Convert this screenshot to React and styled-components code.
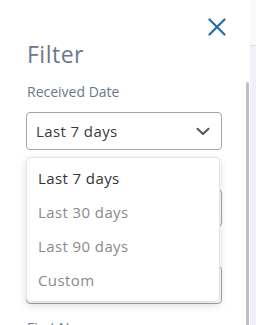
import React from "react";
import styled, { createGlobalStyle } from "styled-components";

const Global = createGlobalStyle`
  html, body { margin: 0; padding: 0; background: #ffffff; }
  body { font-family: "Open Sans", "Noto Sans", sans-serif; }
  #root { width: 256px; height: 325px; overflow: hidden; }
`;

const Page = styled.div`
  display: flex;
  width: 256px;
  height: 325px;
  overflow: hidden;
`;

const Panel = styled.aside`
  position: relative;
  width: 250px;
  flex: none;
  height: 325px;
  background: #ffffff;
  overflow: hidden;
`;

const Backdrop = styled.div`
  flex: 1;
  display: flex;
  flex-direction: column;
  background: #eef1f5;
`;

const BackdropHeader = styled.div`
  height: 45px;
  background: #f8f9fa;
  border-bottom: 1px solid #dde1e6;
`;

const TopBar = styled.div`
  height: 38px;
  display: flex;
  justify-content: flex-end;
  align-items: flex-start;
  padding: 18px 24px 0 0;
  box-sizing: border-box;
`;

const CloseButton = styled.button`
  border: 0;
  background: none;
  padding: 0;
  width: 18px;
  height: 18px;
  cursor: pointer;
  display: block;
`;

const Body = styled.div`
  padding: 0 28px 0 26px;
`;

const Title = styled.h2`
  margin: 0;
  font-size: 23px;
  line-height: 32px;
  font-weight: 400;
  color: #6b778a;
  letter-spacing: 0.5px;
  padding-left: 1px;
`;

const Field = styled.div`
  display: flex;
  flex-direction: column;
  gap: 10px;
  margin-top: ${(p) => p.$top}px;
`;

const Label = styled.label`
  font-size: 14px;
  line-height: 20px;
  color: #6b778a;
  padding-left: 1px;
`;

const SelectWrap = styled.div`
  position: relative;
`;

const SelectBox = styled.div`
  height: 38px;
  box-sizing: border-box;
  border: 1px solid #a3a7ab;
  border-radius: 4px;
  display: flex;
  align-items: center;
  justify-content: space-between;
  padding: 0 11px 0 9px;
  font-size: 15px;
  letter-spacing: 0.4px;
  color: #3a3a3a;
  background: #fff;
`;

const Menu = styled.ul`
  position: absolute;
  top: 45px;
  left: 0;
  width: 194px;
  margin: 0;
  padding: 3px 0 4px;
  list-style: none;
  background: #fff;
  border: 1px solid #e4e4e4;
  border-radius: 4px;
  box-sizing: border-box;
  box-shadow: 0 3px 8px rgba(0, 0, 0, 0.14);
  z-index: 2;
`;

const Item = styled.li`
  height: 34px;
  display: flex;
  align-items: center;
  padding-left: 11px;
  font-size: 15px;
  letter-spacing: 0.4px;
  color: ${(p) => (p.$active ? "#333333" : "#8a8a8a")};
`;

const Scrollbar = styled.div`
  position: absolute;
  left: 246px;
  top: 82px;
  width: 3px;
  bottom: 0;
  background: #c1c1c1;
  border-radius: 2px 2px 0 0;
`;

const Chevron = () => (
  <svg width="14" height="9" viewBox="0 0 14 9">
    <path d="M1.5 1.8 L7 7 L12.5 1.8" fill="none" stroke="#555" strokeWidth="2" strokeLinecap="round" strokeLinejoin="round" />
  </svg>
);

const CloseIcon = () => (
  <svg width="18" height="18" viewBox="0 0 18 18">
    <path d="M1.5 1.5 L16.5 16.5 M16.5 1.5 L1.5 16.5" stroke="#2a6ea8" strokeWidth="2.3" strokeLinecap="round" />
  </svg>
);

const options = ["Last 7 days", "Last 30 days", "Last 90 days", "Custom"];

export default function App() {
  return (
    <>
      <Global />
      <Page>
        <Panel>
          <TopBar>
            <CloseButton aria-label="Close">
              <CloseIcon />
            </CloseButton>
          </TopBar>
          <Body>
            <Title>Filter</Title>
            <Field $top={12}>
              <Label>Received Date</Label>
              <SelectWrap>
                <SelectBox>
                  <span>Last 7 days</span>
                  <Chevron />
                </SelectBox>
                <Menu>
                  {options.map((o, i) => (
                    <Item key={o} $active={i === 0}>{o}</Item>
                  ))}
                </Menu>
              </SelectWrap>
            </Field>
            <Field $top={9}>
              <Label>Status</Label>
              <SelectBox />
            </Field>
            <Field $top={9}>
              <Label>Type</Label>
              <SelectBox />
            </Field>
            <Field $top={14}>
              <Label>First Name</Label>
            </Field>
          </Body>
          <Scrollbar />
        </Panel>
        <Backdrop>
          <BackdropHeader />
        </Backdrop>
      </Page>
    </>
  );
}
